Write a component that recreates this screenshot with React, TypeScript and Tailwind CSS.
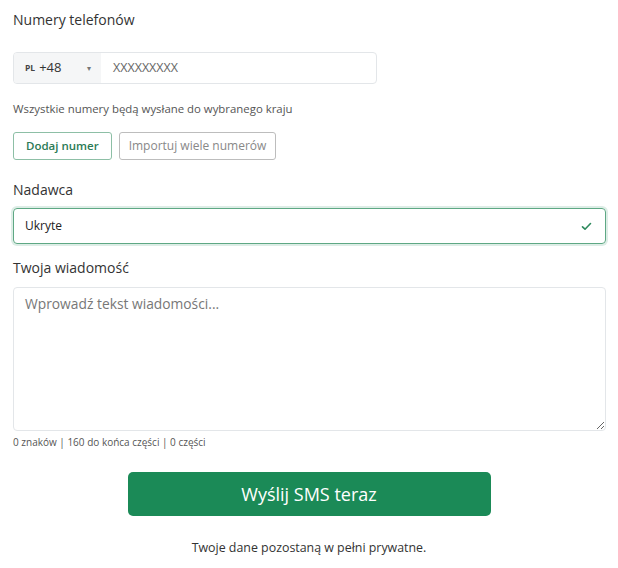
import React from "react";

export default function App() {
  return (
    <div className="min-h-[568px] w-[618px] bg-white px-[13px] pt-[10px] text-[#212529]" style={{ fontFamily: '"Open Sans", "Noto Sans", sans-serif' }}>
      <label className="block text-[14px] leading-[20px] text-[#333]">Numery telefonów</label>

      <div className="mt-[22px] flex h-[32px] w-[364px] overflow-hidden rounded-[4px] border border-[#e3e6e9]">
        <div className="flex w-[87px] items-center bg-[#f5f6f7] pl-[11px] pr-[8px]">
          <span className="text-[8.5px] font-bold text-[#444]">PL</span>
          <span className="ml-[4px] text-[13px] text-[#333]">+48</span>
          <span className="ml-auto mr-[2px] text-[8px] text-[#777]">▾</span>
        </div>
        <div className="flex flex-1 items-center pl-[12px] text-[12.5px] text-[#666]">XXXXXXXXX</div>
      </div>

      <p className="mt-[17px] text-[11.4px] leading-[16px] text-[#555]">Wszystkie numery będą wysłane do wybranego kraju</p>

      <div className="mt-[15px] flex gap-[7px]">
        <button className="h-[28px] rounded-[3px] border border-[#8dbfa6] px-[12px] text-[11.5px] font-semibold text-[#2b7a55]">Dodaj numer</button>
        <button className="h-[28px] rounded-[3px] border border-[#bdbdbd] px-[9px] text-[12px] text-[#888]">Importuj wiele numerów</button>
      </div>

      <label className="mt-[20px] block text-[14px] leading-[20px] text-[#333]">Nadawca</label>

      <div className="mt-[8px] flex h-[36px] w-[593px] items-center justify-between rounded-[4px] border border-[#5ea884] pl-[11px] pr-[13px] shadow-[0_0_0_2px_rgba(25,135,84,0.15)]">
        <span className="text-[12px] text-[#222]">Ukryte</span>
        <svg width="11" height="9" viewBox="0 0 11 9" fill="none">
          <path d="M1.5 4.8 L4 7.2 L9.5 1.5" stroke="#2e8a5e" strokeWidth="1.6" strokeLinecap="round" strokeLinejoin="round" />
        </svg>
      </div>

      <label className="mt-[14px] block text-[14px] leading-[20px] text-[#333]">Twoja wiadomość</label>

      <textarea
        placeholder="Wprowadź tekst wiadomości..."
        className="mt-[9px] block h-[144px] w-[593px] resize-y rounded-[4px] border border-[#e3e6e9] px-[11px] py-[6px] text-[13.8px] leading-[20px] outline-none placeholder:text-[#777]"
      />

      <p className="mt-[4px] text-[10px] leading-[14px] text-[#555]">0 znaków | 160 do końca części | 0 części</p>

      <div className="mt-[23px] flex justify-center">
        <button className="h-[44px] w-[363px] rounded-[5px] bg-[#1b8a57] text-[18px] text-white">Wyślij SMS teraz</button>
      </div>

      <p className="mt-[24px] text-center text-[12.4px] leading-[16px] text-[#333]">Twoje dane pozostaną w pełni prywatne.</p>
    </div>
  );
}
